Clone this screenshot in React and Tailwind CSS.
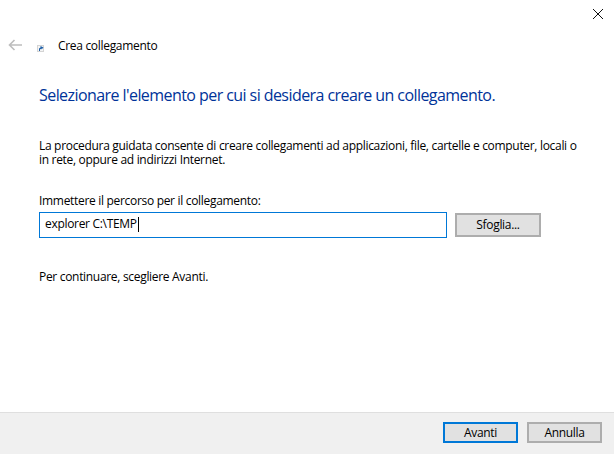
export default function App() {
  return (
    <div className="flex h-[454px] w-[614px] flex-col overflow-hidden bg-white text-[12px] leading-[14px] tracking-[-0.31px] text-black font-['Open_Sans','Noto_Sans',sans-serif]">
      <div className="flex h-[9px] justify-end">
        <svg width="10" height="10" viewBox="0 0 10 10" className="mr-[11px] mt-[9px] shrink-0" fill="none" stroke="#111" strokeWidth="1">
          <path d="M0 0L10 10M10 0L0 10" />
        </svg>
      </div>
      <div className="mt-[27px] flex h-[20px] items-center pl-[8px]">
        <svg width="14" height="12" viewBox="0 0 14 12" fill="none" stroke="#bdbdbd" strokeWidth="1.6" className="mb-[2px] shrink-0">
          <path d="M14 6H1.5M6.5 1L1.5 6l5 5" />
        </svg>
        <svg width="7" height="7" viewBox="0 0 7 7" className="ml-[15px] mt-[5px] shrink-0">
          <rect width="7" height="7" fill="#d4d4d4" />
          <rect x="1" y="1" width="5" height="5" fill="#f4f4f4" />
          <path d="M2 6V3.5L3.5 2.5V1L6.5 2.5L4.5 4.5V3.5L3 4.5V6Z" fill="#1d5fa8" />
        </svg>
        <span className="ml-[14px]">Crea collegamento</span>
      </div>
      <div className="pl-[39px]">
        <h1 className="mt-[29px] text-[16px] leading-[20px] font-normal tracking-[-0.565px] text-[#003399]">
          Selezionare l'elemento per cui si desidera creare un collegamento.
        </h1>
        <p className="mt-[34px] w-[545px]">
          La procedura guidata consente di creare collegamenti ad applicazioni, file, cartelle e computer, locali o in rete, oppure ad indirizzi Internet.
        </p>
        <label className="mt-[27px] block">Immettere il percorso per il collegamento:</label>
        <div className="mt-[4px] flex items-center">
          <div className="flex h-[26px] w-[408px] items-center border border-[#0078d7] pb-[2px] pl-[5px]">
            explorer C:\TEMP
            <span className="ml-px h-[15px] w-px bg-black" />
          </div>
          <button className="ml-[8px] h-[24px] w-[86px] border-2 border-[#adadad] bg-[#e1e1e1]">Sfoglia...</button>
        </div>
        <p className="mt-[32px]">Per continuare, scegliere Avanti.</p>
      </div>
      <div className="mt-auto flex h-[42px] items-start justify-end gap-[9px] border-t border-[#dfdfdf] bg-[#f0f0f0] pr-[12px] pt-[9px]">
        <button className="h-[21px] w-[75px] border-2 border-[#0078d7] bg-[#e1e1e1]">Avanti</button>
        <button className="h-[21px] w-[75px] border-2 border-[#adadad] bg-[#e1e1e1]">Annulla</button>
      </div>
    </div>
  );
}
